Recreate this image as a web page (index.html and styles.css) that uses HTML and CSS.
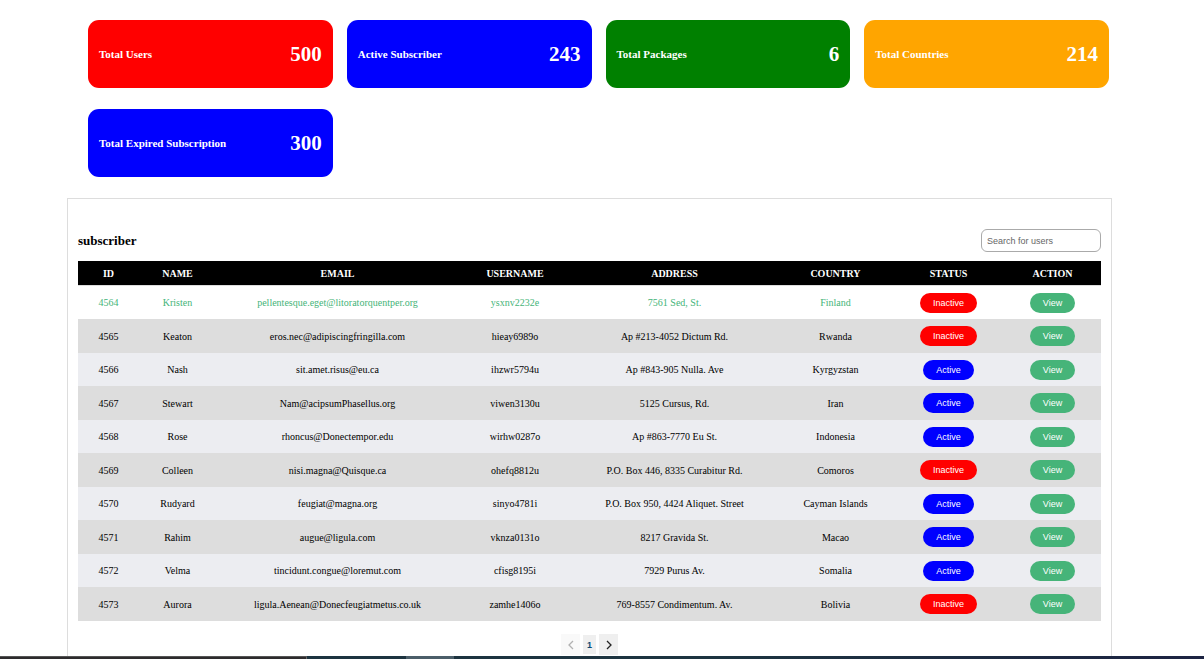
FILE: index.html
```html
<!DOCTYPE html>
<html lang="en">
<head>
<meta charset="utf-8">
<title>Subscribers</title>
<link rel="stylesheet" href="styles.css">
</head>
<body>
<main class="page">
  <section class="cards">
    <article class="card red"><h2 class="card-title">Total Users</h2><p class="card-value">500</p></article>
    <article class="card blue"><h2 class="card-title">Active Subscriber</h2><p class="card-value">243</p></article>
    <article class="card green"><h2 class="card-title">Total Packages</h2><p class="card-value">6</p></article>
    <article class="card orange"><h2 class="card-title">Total Countries</h2><p class="card-value">214</p></article>
    <article class="card blue"><h2 class="card-title">Total Expired Subscription</h2><p class="card-value">300</p></article>
  </section>
  <section class="panel">
    <header class="panel-head">
      <h1 class="panel-title">subscriber</h1>
      <input class="search" type="search" placeholder="Search for users" aria-label="Search for users">
    </header>
    <table class="users">
      <colgroup>
        <col class="c-id"><col class="c-name"><col class="c-email"><col class="c-user"><col class="c-address"><col class="c-country"><col class="c-status"><col class="c-action">
      </colgroup>
      <thead>
        <tr><th>ID</th><th>NAME</th><th>EMAIL</th><th>USERNAME</th><th>ADDRESS</th><th>COUNTRY</th><th>STATUS</th><th>ACTION</th></tr>
      </thead>
      <tbody>
        <tr class="hovered"><td>4564</td><td>Kristen</td><td>pellentesque.eget@litoratorquentper.org</td><td>ysxnv2232e</td><td>7561 Sed, St.</td><td>Finland</td><td><button class="pill inactive">Inactive</button></td><td><button class="pill view">View</button></td></tr>
        <tr><td>4565</td><td>Keaton</td><td>eros.nec@adipiscingfringilla.com</td><td>hieay6989o</td><td>Ap #213-4052 Dictum Rd.</td><td>Rwanda</td><td><button class="pill inactive">Inactive</button></td><td><button class="pill view">View</button></td></tr>
        <tr><td>4566</td><td>Nash</td><td>sit.amet.risus@eu.ca</td><td>ihzwr5794u</td><td>Ap #843-905 Nulla. Ave</td><td>Kyrgyzstan</td><td><button class="pill active">Active</button></td><td><button class="pill view">View</button></td></tr>
        <tr><td>4567</td><td>Stewart</td><td>Nam@acipsumPhasellus.org</td><td>viwen3130u</td><td>5125 Cursus, Rd.</td><td>Iran</td><td><button class="pill active">Active</button></td><td><button class="pill view">View</button></td></tr>
        <tr><td>4568</td><td>Rose</td><td>rhoncus@Donectempor.edu</td><td>wirhw0287o</td><td>Ap #863-7770 Eu St.</td><td>Indonesia</td><td><button class="pill active">Active</button></td><td><button class="pill view">View</button></td></tr>
        <tr><td>4569</td><td>Colleen</td><td>nisi.magna@Quisque.ca</td><td>ohefq8812u</td><td>P.O. Box 446, 8335 Curabitur Rd.</td><td>Comoros</td><td><button class="pill inactive">Inactive</button></td><td><button class="pill view">View</button></td></tr>
        <tr><td>4570</td><td>Rudyard</td><td>feugiat@magna.org</td><td>sinyo4781i</td><td>P.O. Box 950, 4424 Aliquet. Street</td><td>Cayman Islands</td><td><button class="pill active">Active</button></td><td><button class="pill view">View</button></td></tr>
        <tr><td>4571</td><td>Rahim</td><td>augue@ligula.com</td><td>vknza0131o</td><td>8217 Gravida St.</td><td>Macao</td><td><button class="pill active">Active</button></td><td><button class="pill view">View</button></td></tr>
        <tr><td>4572</td><td>Velma</td><td>tincidunt.congue@loremut.com</td><td>cfisg8195i</td><td>7929 Purus Av.</td><td>Somalia</td><td><button class="pill active">Active</button></td><td><button class="pill view">View</button></td></tr>
        <tr><td>4573</td><td>Aurora</td><td>ligula.Aenean@Donecfeugiatmetus.co.uk</td><td>zamhe1406o</td><td>769-8557 Condimentum. Av.</td><td>Bolivia</td><td><button class="pill inactive">Inactive</button></td><td><button class="pill view">View</button></td></tr>
      </tbody>
    </table>
    <nav class="pager" aria-label="Pages">
      <button class="arrow" disabled aria-label="Previous page"><svg width="6" height="10" viewBox="0 0 6 10"><path d="M5 1 1 5l4 4"/></svg></button>
      <button class="number">1</button>
      <button class="arrow" aria-label="Next page"><svg width="6" height="10" viewBox="0 0 6 10"><path d="m1 1 4 4-4 4"/></svg></button>
    </nav>
  </section>
</main>
<div class="strip"><span class="strip-search"></span><span class="strip-gap"></span><span class="strip-app"></span></div>
</body>
</html>
```
FILE: styles.css
```css
* { box-sizing: border-box; }

body {
  margin: 0;
  background: #fff;
  color: #000;
  font-family: "Liberation Serif", "Times New Roman", serif;
  font-size: 10px;
}

.page {
  display: flex;
  flex-direction: column;
  min-height: 100vh;
  padding: 20px 92px 0 67px;
}

.cards {
  display: grid;
  grid-template-columns: repeat(4, 1fr);
  gap: 21px 14px;
  padding: 0 3px 0 21px;
}

.card {
  display: flex;
  align-items: center;
  justify-content: space-between;
  height: 68px;
  padding: 0 11px;
  border-radius: 11px;
  color: #fff;
}

.red { background: #f00; }
.blue { background: #00f; }
.green { background: #008000; }
.orange { background: #ffa500; }

.card-title { margin: 0; font-size: 11px; }
.card-value { margin: 0; font-size: 21px; font-weight: bold; }

.panel {
  flex: 1;
  margin-top: 21px;
  padding: 30px 10px 0;
  border: 1px solid #ddd;
}

.panel-head {
  display: flex;
  align-items: center;
  justify-content: space-between;
  margin-bottom: 9px;
}

.panel-title { margin: 0; font-size: 13px; }

.search {
  width: 120px;
  height: 23px;
  padding: 0 5px;
  border: 1px solid #aaa;
  border-radius: 6px;
  background: #fff;
  font-family: "Liberation Sans", Arial, sans-serif;
  font-size: 9px;
  appearance: none;
}

.search::placeholder { color: #666; }

.users {
  width: 100%;
  table-layout: fixed;
  border-collapse: separate;
  border-spacing: 0;
  text-align: center;
}

.c-id { width: 61px; }
.c-name { width: 77px; }
.c-email { width: 243px; }
.c-user { width: 112px; }
.c-address { width: 207px; }
.c-country { width: 115px; }
.c-status { width: 111px; }
.c-action { width: 97px; }

th, td { padding: 0; }

th {
  height: 24px;
  background: #000;
  color: #fff;
  font-size: 10px;
}

tbody tr { background: #ecedf1; }
tbody td { height: 33px; }
tbody tr:nth-child(even) { background: #ddd; }
tbody tr:nth-child(even) td { height: 34px; }
tbody .hovered { background: #fff; color: #44b478; }
tbody .hovered td { height: 34px; border-top: 1px solid #ddd; }

.pill {
  height: 20px;
  padding: 0 13px;
  border: 0;
  border-radius: 10px;
  color: #fff;
  font-family: "Liberation Sans", Arial, sans-serif;
  font-size: 9px;
  vertical-align: middle;
}

.inactive { background: #f00; }
.active { background: #00f; }
.view { background: #46b479; }

.pager {
  display: flex;
  align-items: center;
  justify-content: center;
  gap: 3px;
  padding-top: 13px;
}

.arrow, .number {
  display: flex;
  align-items: center;
  justify-content: center;
  padding: 0;
  border: 0;
  background: #efefef;
}

.arrow { width: 19px; height: 21px; }
.arrow:disabled { opacity: 0.35; }
.arrow path { fill: none; stroke: #222; stroke-width: 1.3; }

.number {
  width: 13px;
  height: 19px;
  color: #0b4a73;
  font: bold 9px "Liberation Sans", Arial, sans-serif;
}

.strip {
  position: fixed;
  right: 0;
  bottom: 0;
  left: 0;
  display: flex;
  height: 3px;
  background: linear-gradient(90deg, #1d3440 0%, #1d3440 60%, #1c2342 100%);
}

.strip-search { width: 307px; border-top: 1px solid #555; border-right: 1px solid #666; background: #2d2b2d; }
.strip-gap { width: 99px; }
.strip-app { width: 48px; background: #4b5e69; }
```
